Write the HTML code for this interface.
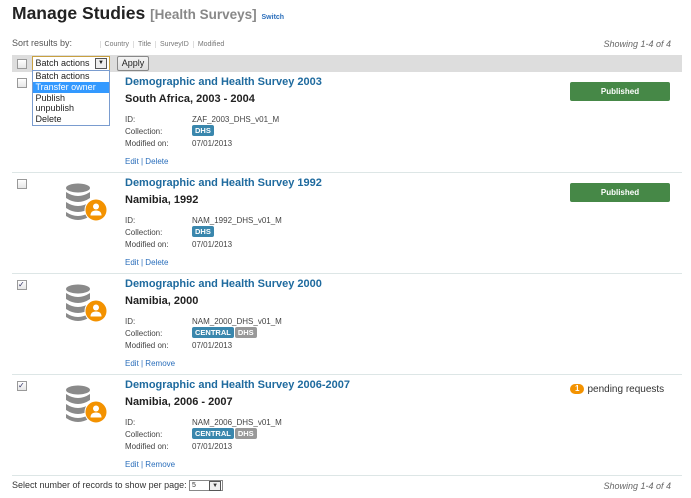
<!DOCTYPE html>
<html><head><meta charset="utf-8"><style>
body{margin:0;width:691px;height:498px;background:#fff;font-family:"Liberation Sans",Arial,sans-serif;position:relative;overflow:hidden;color:#333}
.a{position:absolute;white-space:nowrap}
h1{position:absolute;left:12px;top:3px;margin:0;font-size:17.5px;font-weight:bold;color:#222}
h1 span{color:#888;font-size:13.5px}
h1 a{color:#2a6ebb;font-size:7px;font-weight:bold}
.sort{left:12px;top:38px;font-size:9px;color:#555}
.sl{font-size:7px;color:#777;border-left:1px solid #ddd;padding:0 4px}
.show{font-size:9px;font-style:italic;color:#666}
.bar{left:12px;top:55px;width:670px;height:17px;background:#ddd}
.cb{width:8px;height:8px;border:1px solid #999;background:linear-gradient(#fff,#e6e6e6)}
.row{left:12px;width:670px;height:100px;border-bottom:1px solid #dde6e6}
.t{left:113px;top:4px;font-size:11px;font-weight:bold;color:#1e6a9e}
.c{left:113px;top:21px;font-size:11px;font-weight:bold;color:#222}
.k{left:113px;font-size:8px;color:#444}
.v{left:180px;font-size:8px;color:#444}
.lab{display:inline-block;font-size:7.5px;font-weight:bold;color:#fff;background:#3a87ad;padding:1px 3px;border-radius:2px;margin-right:1px}
.gr{background:#999}
.ed{left:113px;top:85px;font-size:8px;color:#2a6ebb}
.pub{left:558px;top:10px;width:100px;height:19px;background:#468847;border-radius:2px;color:#fff;font-size:8px;font-weight:bold;text-align:center;line-height:19px}
.ic{left:53px;top:10px}
</style></head><body>
<h1>Manage Studies <span>[Health Surveys]</span> <a>Switch</a></h1>
<div class="a sort">Sort results by: &nbsp; &nbsp; &nbsp; &nbsp; &nbsp; <span class="sl">Country</span><span class="sl">Title</span><span class="sl">SurveyID</span><span class="sl">Modified</span></div>
<div class="a show" style="right:20px;top:39px">Showing 1-4 of 4</div>
<div class="a bar"></div>
<div class="a cb" style="left:17px;top:59px"></div>

<div class="a row" style="top:72px">
<div class="a cb" style="left:5px;top:6px"></div>
<div class="a t">Demographic and Health Survey 2003</div>
<div class="a c">South Africa, 2003 - 2004</div>
<div class="a k" style="top:43px">ID:</div><div class="a v" style="top:43px">ZAF_2003_DHS_v01_M</div>
<div class="a k" style="top:55px">Collection:</div><div class="a v" style="top:53px"><span class="lab">DHS</span></div>
<div class="a k" style="top:67px">Modified on:</div><div class="a v" style="top:67px">07/01/2013</div>
<div class="a ed">Edit | Delete</div>
<div class="a pub">Published</div>
</div>

<div class="a row" style="top:173px">
<div class="a cb" style="left:5px;top:6px"></div>
<svg class="a ic" width="42" height="40" viewBox="0 0 42 40"><g fill="#8a8a8a"><ellipse cx="13" cy="5" rx="12" ry="4.5"/><path d="M1 9q12 8 24 0v6q-12 8-24 0z"/><path d="M1 19q12 8 24 0v6q-12 8-24 0z"/><path d="M1 29q12 8 24 0v4q-12 8-24 0z"/></g><circle cx="31" cy="27" r="11" fill="#f39200" stroke="#fff" stroke-width="1"/><circle cx="31" cy="23.5" r="3" fill="#fff"/><path d="M25.5 32.5q0-5 5.5-5t5.5 5z" fill="#fff"/></svg>
<div class="a t">Demographic and Health Survey 1992</div>
<div class="a c">Namibia, 1992</div>
<div class="a k" style="top:43px">ID:</div><div class="a v" style="top:43px">NAM_1992_DHS_v01_M</div>
<div class="a k" style="top:55px">Collection:</div><div class="a v" style="top:53px"><span class="lab">DHS</span></div>
<div class="a k" style="top:67px">Modified on:</div><div class="a v" style="top:67px">07/01/2013</div>
<div class="a ed">Edit | Delete</div>
<div class="a pub">Published</div>
</div>

<div class="a row" style="top:274px">
<div class="a cb" style="left:5px;top:6px;font-size:8px;line-height:8px;color:#336">✓</div>
<svg class="a ic" width="42" height="40" viewBox="0 0 42 40"><g fill="#8a8a8a"><ellipse cx="13" cy="5" rx="12" ry="4.5"/><path d="M1 9q12 8 24 0v6q-12 8-24 0z"/><path d="M1 19q12 8 24 0v6q-12 8-24 0z"/><path d="M1 29q12 8 24 0v4q-12 8-24 0z"/></g><circle cx="31" cy="27" r="11" fill="#f39200" stroke="#fff" stroke-width="1"/><circle cx="31" cy="23.5" r="3" fill="#fff"/><path d="M25.5 32.5q0-5 5.5-5t5.5 5z" fill="#fff"/></svg>
<div class="a t">Demographic and Health Survey 2000</div>
<div class="a c">Namibia, 2000</div>
<div class="a k" style="top:43px">ID:</div><div class="a v" style="top:43px">NAM_2000_DHS_v01_M</div>
<div class="a k" style="top:55px">Collection:</div><div class="a v" style="top:53px"><span class="lab">CENTRAL</span><span class="lab gr">DHS</span></div>
<div class="a k" style="top:67px">Modified on:</div><div class="a v" style="top:67px">07/01/2013</div>
<div class="a ed">Edit | Remove</div>
</div>

<div class="a row" style="top:375px">
<div class="a cb" style="left:5px;top:6px;font-size:8px;line-height:8px;color:#336">✓</div>
<svg class="a ic" width="42" height="40" viewBox="0 0 42 40"><g fill="#8a8a8a"><ellipse cx="13" cy="5" rx="12" ry="4.5"/><path d="M1 9q12 8 24 0v6q-12 8-24 0z"/><path d="M1 19q12 8 24 0v6q-12 8-24 0z"/><path d="M1 29q12 8 24 0v4q-12 8-24 0z"/></g><circle cx="31" cy="27" r="11" fill="#f39200" stroke="#fff" stroke-width="1"/><circle cx="31" cy="23.5" r="3" fill="#fff"/><path d="M25.5 32.5q0-5 5.5-5t5.5 5z" fill="#fff"/></svg>
<div class="a t">Demographic and Health Survey 2006-2007</div>
<div class="a c">Namibia, 2006 - 2007</div>
<div class="a k" style="top:43px">ID:</div><div class="a v" style="top:43px">NAM_2006_DHS_v01_M</div>
<div class="a k" style="top:55px">Collection:</div><div class="a v" style="top:53px"><span class="lab">CENTRAL</span><span class="lab gr">DHS</span></div>
<div class="a k" style="top:67px">Modified on:</div><div class="a v" style="top:67px">07/01/2013</div>
<div class="a ed">Edit | Remove</div>
<div class="a" style="left:558px;top:9px;font-size:10px;color:#333"><span style="display:inline-block;background:#f39200;color:#fff;font-weight:bold;font-size:8px;line-height:10px;border-radius:6px;padding:0 5px;margin-right:3px;vertical-align:1px">1</span>pending requests</div>
</div>

<div class="a" style="left:12px;top:480px;font-size:9px;color:#333">Select number of records to show per page: <span style="display:inline-block;width:32px;height:9px;border:1px solid #888;vertical-align:middle;font-size:7px;line-height:9px;position:relative">&nbsp;5<span style="position:absolute;right:1px;top:0;width:10px;height:8px;border:1px solid #555;background:#eee;font-size:6px;text-align:center">▼</span></span></div>
<div class="a show" style="right:20px;top:481px">Showing 1-4 of 4</div>

<div class="a" style="left:32px;top:56px;width:76px;height:13px;border:1px solid #c8a040;background:#fff;font-size:9px;line-height:13px;color:#222">&nbsp;Batch actions<span style="position:absolute;right:2px;top:1px;width:10px;height:9px;border:1px solid #555;background:#eee;font-size:6px;text-align:center;line-height:9px">▼</span></div>
<div class="a" style="left:117px;top:56px;width:30px;height:13px;border:1px solid #888;border-radius:2px;background:linear-gradient(#f4f4f4,#ddd);font-size:9px;line-height:13px;text-align:center;color:#222">Apply</div>
<div class="a" style="left:32px;top:70px;width:76px;height:54px;border:1px solid #7a9ccf;background:#fff;font-size:9px;line-height:10.8px;color:#222">
<div>&nbsp;Batch actions</div><div style="background:#3399ff;color:#fff">&nbsp;Transfer owner</div><div>&nbsp;Publish</div><div>&nbsp;unpublish</div><div>&nbsp;Delete</div></div>
</body></html>
